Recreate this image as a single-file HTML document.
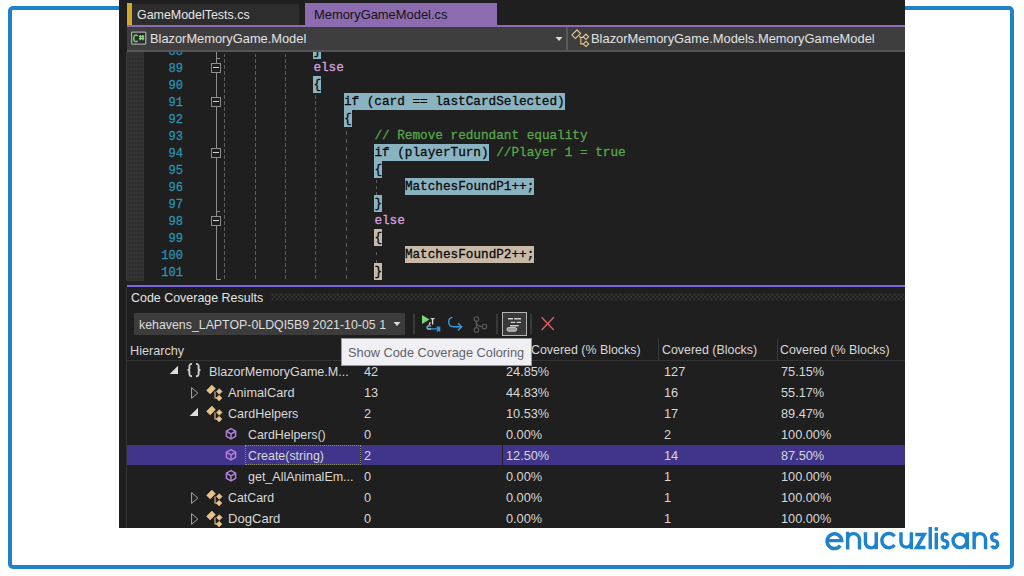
<!DOCTYPE html><html><head><meta charset="utf-8"><style>
*{margin:0;padding:0;box-sizing:border-box}
html,body{width:1024px;height:576px;overflow:hidden;background:#fff;position:relative;font-family:"Liberation Sans",sans-serif}
.a{position:absolute}
.t{position:absolute;white-space:pre;line-height:1}
.frame{left:8px;top:6px;width:1006px;height:563px;border:4px solid #1d82ca;border-radius:5px}
.vs{left:119px;top:0;width:786px;height:528px;background:#1f1f1f}
.cl{position:absolute;font-family:"Liberation Mono",monospace;font-size:12.7px;-webkit-text-stroke:0.3px currentColor;white-space:pre;line-height:17px;height:17px;color:#dcdcdc}
.ln{position:absolute;font-family:"Liberation Mono",monospace;font-size:13px;-webkit-text-stroke:0.3px currentColor;margin-top:1px;transform:scaleX(0.93);transform-origin:100% 0;white-space:pre;line-height:17px;height:17px;color:#2b91af;text-align:right;width:60px;left:123px}
.hb{background:#8ab3c2;color:#0a0a0a;display:inline-block;height:17px;vertical-align:top}
.hy{background:#c7baa8;color:#0a0a0a;display:inline-block;height:17px;vertical-align:top}
.kw{color:#d8a0df}
.cm{color:#57a64a}
.ui{font-size:12.6px;color:#dedede}
.row{position:absolute;left:127px;width:778px;height:21px}
</style></head><body>
<div class="a frame"></div>
<div class="a vs"></div>
<div class="a" style="left:127px;top:3px;width:5px;height:22px;background:#d2a72a"></div>
<div class="a" style="left:132px;top:4px;width:167px;height:21px;background:#2d2d2d"></div>
<div class="t" style="left:136.90px;top:8.07px;font-size:13.50px;color:#e6e6e6;transform:scaleX(0.9209);transform-origin:0 0;">GameModelTests.cs</div>
<div class="a" style="left:305px;top:3px;width:192px;height:22px;background:#8c6bb1"></div>
<div class="t" style="left:313.50px;top:8.07px;font-size:13.50px;color:#141414;transform:scaleX(0.9564);transform-origin:0 0;">MemoryGameModel.cs</div>
<div class="a" style="left:127px;top:25px;width:778px;height:2px;background:#8c6bb1"></div>
<div class="a" style="left:127px;top:27px;width:778px;height:23px;background:#3e3e3e"></div>
<div class="a" style="left:127px;top:50px;width:778px;height:2px;background:#555"></div>
<div class="a" style="left:566px;top:27px;width:2px;height:23px;background:#5a5a5a"></div>
<svg class="a" style="left:130px;top:30px" width="18" height="16" viewBox="0 0 18 16"><rect x="1.65" y="2.05" width="14.1" height="12.1" rx="0.8" fill="#2c2c2c" stroke="#a6a6a6" stroke-width="1.3"/><path d="M7.7 5.9 C7.1 5.3 6.5 5.1 5.9 5.1 C4.4 5.1 3.8 6.6 3.8 8.4 C3.8 10.3 4.5 11.7 5.9 11.7 C6.6 11.7 7.2 11.4 7.7 10.9" fill="none" stroke="#74cc74" stroke-width="1.5"/><path d="M10.3 5v5.2M12.9 5v5.2M9 6.7h5.2M9 8.7h5.2" stroke="#8ade8a" stroke-width="1.3"/></svg>
<div class="t" style="left:149.70px;top:32.47px;font-size:13.50px;color:#e2e2e2;transform:scaleX(0.9510);transform-origin:0 0;">BlazorMemoryGame.Model</div>
<svg class="a" style="left:554px;top:35px" width="10" height="8"><path d="M1.5 2h7l-3.5 4z" fill="#ddd"/></svg>
<svg class="a" style="left:569px;top:27px" width="22" height="22" viewBox="0 0 22 22"><g fill="none" stroke="#eec88e" stroke-width="1.1"><rect x="-3.6" y="-2.5" width="7.2" height="5" transform="translate(7.2 7.2) rotate(-45)"/><rect x="-1.9" y="-1.9" width="3.8" height="3.8" transform="translate(16.9 9.8) rotate(45)"/><rect x="-1.9" y="-1.9" width="3.8" height="3.8" transform="translate(17 16.9) rotate(45)"/><path d="M10.2 9.6 L11.8 10.4 V16.9 H14.3 M11.8 10.4 H14.3"/></g></svg>
<div class="t" style="left:591.00px;top:32.47px;font-size:13.50px;color:#e2e2e2;transform:scaleX(0.9548);transform-origin:0 0;">BlazorMemoryGame.Models.MemoryGameModel</div>
<div class="a" style="left:119px;top:52px;width:786px;height:229px;overflow:hidden">
<div class="a" style="left:-119px;top:-52px;width:1024px;height:576px">
<div class="a" style="left:126px;top:52px;width:1px;height:229px;background:#3a3a3a"></div>
<div class="a" style="left:127px;top:52px;width:17px;height:229px;background:#2f2f2f radial-gradient(circle,#3b3b3b 0.6px,transparent 0.9px) 2.5px 3px/3px 4px"></div>
<div class="a" style="left:216px;top:52px;width:1px;height:228px;background:#8e8e8e"></div>
<div class="a" style="left:216px;top:58px;width:4px;height:1px;background:#8e8e8e"></div>
<div class="a" style="left:216px;top:279px;width:5px;height:1px;background:#8e8e8e"></div>
<div class="a" style="left:216px;top:211px;width:4px;height:1px;background:#8e8e8e"></div>
<div class="a" style="left:211px;top:63px;width:10px;height:10px;border:1px solid #8e8e8e;background:#1f1f1f"></div>
<div class="a" style="left:213px;top:67px;width:6px;height:1px;background:#cfcfcf"></div>
<div class="a" style="left:211px;top:97px;width:10px;height:10px;border:1px solid #8e8e8e;background:#1f1f1f"></div>
<div class="a" style="left:213px;top:101px;width:6px;height:1px;background:#cfcfcf"></div>
<div class="a" style="left:211px;top:148px;width:10px;height:10px;border:1px solid #8e8e8e;background:#1f1f1f"></div>
<div class="a" style="left:213px;top:152px;width:6px;height:1px;background:#cfcfcf"></div>
<div class="a" style="left:211px;top:216px;width:10px;height:10px;border:1px solid #8e8e8e;background:#1f1f1f"></div>
<div class="a" style="left:213px;top:220px;width:6px;height:1px;background:#cfcfcf"></div>
<div class="a" style="left:224.0px;top:52px;width:1px;height:228px;background:repeating-linear-gradient(transparent 0 1.5px,#5c5c5c 1.5px 5.0px,transparent 5.0px 6.0px)"></div>
<div class="a" style="left:254.5px;top:52px;width:1px;height:228px;background:repeating-linear-gradient(transparent 0 1.5px,#5c5c5c 1.5px 5.0px,transparent 5.0px 6.0px)"></div>
<div class="a" style="left:284.9px;top:52px;width:1px;height:228px;background:repeating-linear-gradient(transparent 0 1.5px,#5c5c5c 1.5px 5.0px,transparent 5.0px 6.0px)"></div>
<div class="a" style="left:315.4px;top:93px;width:1px;height:187px;background:repeating-linear-gradient(transparent 0 2.5px,#5c5c5c 2.5px 6.0px,transparent 6.0px 6.0px)"></div>
<div class="a" style="left:345.9px;top:127px;width:1px;height:153px;background:repeating-linear-gradient(transparent 0 4.5px,#5c5c5c 4.5px 8.0px,transparent 8.0px 6.0px)"></div>
<div class="a" style="left:376.4px;top:178px;width:1px;height:17px;background:repeating-linear-gradient(transparent 0 1.5px,#5c5c5c 1.5px 5.0px,transparent 5.0px 6.0px)"></div>
<div class="a" style="left:376.4px;top:246px;width:1px;height:17px;background:repeating-linear-gradient(transparent 0 5.5px,#5c5c5c 5.5px 9.0px,transparent 9.0px 6.0px)"></div>
<div class="ln" style="top:42px">88</div>
<div class="ln" style="top:59px">89</div>
<div class="ln" style="top:76px">90</div>
<div class="ln" style="top:93px">91</div>
<div class="ln" style="top:110px">92</div>
<div class="ln" style="top:127px">93</div>
<div class="ln" style="top:144px">94</div>
<div class="ln" style="top:161px">95</div>
<div class="ln" style="top:178px">96</div>
<div class="ln" style="top:195px">97</div>
<div class="ln" style="top:212px">98</div>
<div class="ln" style="top:229px">99</div>
<div class="ln" style="top:246px">100</div>
<div class="ln" style="top:263px">101</div>
<div class="cl" style="left:313.4px;top:42px"><span class="hb">}</span></div>
<div class="cl" style="left:313.4px;top:59px"><span class="kw">else</span></div>
<div class="cl" style="left:313.4px;top:76px"><span class="hb">{</span></div>
<div class="cl" style="left:343.9px;top:93px"><span class="hb">if (card == lastCardSelected)</span></div>
<div class="cl" style="left:343.9px;top:110px"><span class="hb">{</span></div>
<div class="cl" style="left:374.4px;top:127px"><span class="cm">// Remove redundant equality</span></div>
<div class="cl" style="left:374.4px;top:144px"><span class="hb">if (playerTurn)</span> <span class="cm">//Player 1 = true</span></div>
<div class="cl" style="left:374.4px;top:161px"><span class="hb">{</span></div>
<div class="cl" style="left:404.9px;top:178px"><span class="hb">MatchesFoundP1++;</span></div>
<div class="cl" style="left:374.4px;top:195px"><span class="hb">}</span></div>
<div class="cl" style="left:374.4px;top:212px"><span class="kw">else</span></div>
<div class="cl" style="left:374.4px;top:229px"><span class="hy">{</span></div>
<div class="cl" style="left:404.9px;top:246px"><span class="hy">MatchesFoundP2++;</span></div>
<div class="cl" style="left:374.4px;top:263px"><span class="hy">}</span></div>
</div></div>
<div class="a" style="left:119px;top:281px;width:786px;height:247px;background:#1f1f1f"></div>
<div class="a" style="left:126px;top:287px;width:1px;height:241px;background:#333"></div>
<div class="a" style="left:127px;top:285px;width:778px;height:2px;background:#7a64e0"></div>
<div class="t" style="left:131.10px;top:290.77px;font-size:13.50px;color:#e4e4e4;transform:scaleX(0.9218);transform-origin:0 0;">Code Coverage Results</div>
<svg class="a" style="left:271px;top:293px" width="634" height="8"><defs><pattern id="hp" x="0" y="0" width="4.35" height="4.7" patternUnits="userSpaceOnUse"><rect x="0.6" y="0.8" width="1.6" height="1.6" fill="#444"/><rect x="2.77" y="3.15" width="1.6" height="1.6" fill="#444"/></pattern></defs><rect x="0" y="0" width="634" height="7.6" fill="url(#hp)"/></svg>
<div class="a" style="left:134px;top:313px;width:271px;height:22px;background:#3c3c3c"></div>
<div class="t" style="left:139.10px;top:318.27px;font-size:13.50px;color:#dcdcdc;transform:scaleX(0.9151);transform-origin:0 0;">kehavens_LAPTOP-0LDQI5B9 2021-10-05 1</div>
<svg class="a" style="left:392px;top:320px" width="10" height="8"><path d="M1.5 2h7l-3.5 4z" fill="#ddd"/></svg>
<div class="a" style="left:412.5px;top:314px;width:2.5px;height:20px;background:#3a3a3a"></div>
<div class="a" style="left:495.5px;top:314px;width:2.5px;height:20px;background:#3a3a3a"></div>
<div class="a" style="left:529.5px;top:314px;width:2.5px;height:20px;background:#3a3a3a"></div>
<svg class="a" style="left:418px;top:312px" width="26" height="22" viewBox="0 0 26 22"><path d="M4 3.1 L11.5 7.5 L4 11.9z" fill="#7cd67a"/><path d="M12.6 6.6 H16.6 M14.6 6.6 V12.6 M12.2 10.2 L11.2 12.8" fill="none" stroke="#d4d4d4" stroke-width="1.4"/><path d="M13 13.8 H10.8 C8.4 13.8 8.4 17 10.8 17 H13" fill="none" stroke="#84c8ee" stroke-width="1.3"/><path d="M13 16.9 H20 M18.8 14.4 L21.3 16.9 L18.8 19.4 M21.6 14.4 V19.4" fill="none" stroke="#3a96da" stroke-width="1.4"/></svg>
<svg class="a" style="left:444px;top:312px" width="22" height="22" viewBox="0 0 22 22"><path d="M8.4 5.4 C3.6 6.2 3 14.2 9.4 14.8 H17.4 M14 11.2 l3.6 3.6 -3.6 3.6" fill="none" stroke="#3c99dd" stroke-width="1.4"/></svg>
<svg class="a" style="left:470px;top:314px" width="20" height="20" viewBox="0 0 20 20"><g fill="none" stroke="#5c5c5c" stroke-width="1.1"><circle cx="6.4" cy="5.1" r="2.3"/><circle cx="6.4" cy="15.9" r="2.3"/><circle cx="14.4" cy="12.6" r="2.3"/><path d="M6.4 7.4v6.2M6.4 8.6 C6.6 11 9 12.4 12.1 12.6"/></g></svg>
<div class="a" style="left:502px;top:312px;width:24.5px;height:24px;border:1.5px solid #b4b4b4;background:#393939"></div>
<svg class="a" style="left:502px;top:312px" width="25" height="24" viewBox="0 0 25 24"><g stroke="#d0d0d0" stroke-width="1.4"><path d="M6 6.7h5M12.2 6.7h6.8M8.6 10.4h4.6M14.6 10.4h4.4M8 13.7h8.6"/></g><rect x="5" y="15.6" width="9.6" height="3.6" rx="1.6" fill="#9a9a9a" stroke="#d0d0d0" stroke-width="1"/></svg>
<svg class="a" style="left:539px;top:315px" width="17" height="17" viewBox="0 0 17 17"><path d="M2.6 2.2 L14.8 14.9 M14.8 2.2 L2.6 14.9" stroke="#e05a66" stroke-width="1.4"/></svg>
<div class="t" style="left:130.40px;top:343.97px;font-size:13.50px;color:#d8d8d8;transform:scaleX(0.9372);transform-origin:0 0;">Hierarchy</div>
<div class="a" style="left:127px;top:360px;width:778px;height:1px;background:#333"></div>
<div class="a" style="left:658.0px;top:339px;width:1px;height:21px;background:#3a3a3a"></div>
<div class="a" style="left:776.5px;top:339px;width:1px;height:21px;background:#3a3a3a"></div>
<div class="t" style="left:530.50px;top:343.47px;font-size:13.50px;color:#d8d8d8;transform:scaleX(0.9181);transform-origin:0 0;">Covered (% Blocks)</div>
<div class="t" style="left:662.00px;top:343.47px;font-size:13.50px;color:#d8d8d8;transform:scaleX(0.9190);transform-origin:0 0;">Covered (Blocks)</div>
<div class="t" style="left:780.00px;top:343.47px;font-size:13.50px;color:#d8d8d8;transform:scaleX(0.9190);transform-origin:0 0;">Covered (% Blocks)</div>
<svg class="a" style="left:168.8px;top:365px" width="10" height="10"><path d="M9 0.7 V9 H0.7z" fill="#dcdcdc"/></svg>
<svg class="a" style="left:185px;top:361px" width="18" height="18" viewBox="0 0 18 18"><g fill="none" stroke="#d0d0d0" stroke-width="1.85"><path d="M7 2.8 C4.6 2.8 4.4 3.6 4.4 5.6 V7.4 C4.4 8.5 3.7 9 2.6 9 C3.7 9 4.4 9.5 4.4 10.6 V12.4 C4.4 14.4 4.6 15.2 7 15.2"/><path d="M11 2.8 C13.4 2.8 13.6 3.6 13.6 5.6 V7.4 C13.6 8.5 14.3 9 15.4 9 C14.3 9 13.6 9.5 13.6 10.6 V12.4 C13.6 14.4 13.4 15.2 11 15.2"/></g></svg>
<div class="t" style="left:208.70px;top:364.57px;font-size:13.50px;color:#d8d8d8;transform:scaleX(0.9320);transform-origin:0 0;">BlazorMemoryGame.M...</div>
<div class="t" style="left:364.00px;top:364.57px;font-size:13.50px;color:#d8d8d8;transform:scaleX(0.9435);transform-origin:0 0;">42</div>
<div class="t" style="left:506.00px;top:364.57px;font-size:13.50px;color:#d8d8d8;transform:scaleX(0.9435);transform-origin:0 0;">24.85%</div>
<div class="t" style="left:663.50px;top:364.57px;font-size:13.50px;color:#d8d8d8;transform:scaleX(0.9435);transform-origin:0 0;">127</div>
<div class="t" style="left:781.00px;top:364.57px;font-size:13.50px;color:#d8d8d8;transform:scaleX(0.9435);transform-origin:0 0;">75.15%</div>
<svg class="a" style="left:189.6px;top:386px" width="10" height="14"><path d="M1.6 1.6 L7.8 7 L1.6 12.4z" fill="none" stroke="#a8a8a8" stroke-width="1"/></svg>
<svg class="a" style="left:204.5px;top:384px" width="18" height="18" viewBox="0 0 18 18"><g fill="#e6c286" stroke="#e6c286" stroke-width="0.6"><rect x="-3.7" y="-2.5" width="7.4" height="5" transform="translate(6 5.5) rotate(-45)"/><rect x="-2" y="-2" width="4" height="4" transform="translate(14.3 7.5) rotate(45)"/><rect x="-2" y="-2" width="4" height="4" transform="translate(14.1 14.1) rotate(45)"/></g><path d="M10 7.5 V14 H12.5" fill="none" stroke="#e6c286" stroke-width="1.1"/></svg>
<div class="t" style="left:228.10px;top:385.57px;font-size:13.50px;color:#d8d8d8;transform:scaleX(0.9435);transform-origin:0 0;">AnimalCard</div>
<div class="t" style="left:364.00px;top:385.57px;font-size:13.50px;color:#d8d8d8;transform:scaleX(0.9435);transform-origin:0 0;">13</div>
<div class="t" style="left:506.00px;top:385.57px;font-size:13.50px;color:#d8d8d8;transform:scaleX(0.9435);transform-origin:0 0;">44.83%</div>
<div class="t" style="left:663.50px;top:385.57px;font-size:13.50px;color:#d8d8d8;transform:scaleX(0.9435);transform-origin:0 0;">16</div>
<div class="t" style="left:781.00px;top:385.57px;font-size:13.50px;color:#d8d8d8;transform:scaleX(0.9435);transform-origin:0 0;">55.17%</div>
<svg class="a" style="left:188.8px;top:407px" width="10" height="10"><path d="M9 0.7 V9 H0.7z" fill="#dcdcdc"/></svg>
<svg class="a" style="left:204.5px;top:405px" width="18" height="18" viewBox="0 0 18 18"><g fill="#e6c286" stroke="#e6c286" stroke-width="0.6"><rect x="-3.7" y="-2.5" width="7.4" height="5" transform="translate(6 5.5) rotate(-45)"/><rect x="-2" y="-2" width="4" height="4" transform="translate(14.3 7.5) rotate(45)"/><rect x="-2" y="-2" width="4" height="4" transform="translate(14.1 14.1) rotate(45)"/></g><path d="M10 7.5 V14 H12.5" fill="none" stroke="#e6c286" stroke-width="1.1"/></svg>
<div class="t" style="left:228.10px;top:406.57px;font-size:13.50px;color:#d8d8d8;transform:scaleX(0.9281);transform-origin:0 0;">CardHelpers</div>
<div class="t" style="left:364.00px;top:406.57px;font-size:13.50px;color:#d8d8d8;transform:scaleX(0.9435);transform-origin:0 0;">2</div>
<div class="t" style="left:506.00px;top:406.57px;font-size:13.50px;color:#d8d8d8;transform:scaleX(0.9435);transform-origin:0 0;">10.53%</div>
<div class="t" style="left:663.50px;top:406.57px;font-size:13.50px;color:#d8d8d8;transform:scaleX(0.9435);transform-origin:0 0;">17</div>
<div class="t" style="left:781.00px;top:406.57px;font-size:13.50px;color:#d8d8d8;transform:scaleX(0.9435);transform-origin:0 0;">89.47%</div>
<svg class="a" style="left:223.9px;top:427.3px" width="14" height="14" viewBox="0 0 14 14"><g fill="none" stroke="#b07fd8" stroke-width="1.5"><path d="M7 1.6 L11.6 4.2 V9.4 L7 12 L2.4 9.4 V4.2z"/><path d="M2.8 4.5 L7 6.9 L11.2 4.5 M7 6.9 V11.6"/></g></svg>
<div class="t" style="left:247.50px;top:427.57px;font-size:13.50px;color:#d8d8d8;transform:scaleX(0.9168);transform-origin:0 0;">CardHelpers()</div>
<div class="t" style="left:364.00px;top:427.57px;font-size:13.50px;color:#d8d8d8;transform:scaleX(0.9435);transform-origin:0 0;">0</div>
<div class="t" style="left:506.00px;top:427.57px;font-size:13.50px;color:#d8d8d8;transform:scaleX(0.9435);transform-origin:0 0;">0.00%</div>
<div class="t" style="left:663.50px;top:427.57px;font-size:13.50px;color:#d8d8d8;transform:scaleX(0.9435);transform-origin:0 0;">2</div>
<div class="t" style="left:781.00px;top:427.57px;font-size:13.50px;color:#d8d8d8;transform:scaleX(0.9435);transform-origin:0 0;">100.00%</div>
<div class="a" style="left:127px;top:445px;width:778px;height:20px;background:#40358a"></div>
<div class="a" style="left:360px;top:445px;width:1px;height:20px;background:#1f1f1f"></div>
<div class="a" style="left:502px;top:445px;width:1px;height:20px;background:#1f1f1f"></div>
<div class="a" style="left:244.5px;top:445px;width:116px;height:20px;border:1px dotted #8a8a70"></div>
<svg class="a" style="left:223.9px;top:448.3px" width="14" height="14" viewBox="0 0 14 14"><g fill="none" stroke="#b07fd8" stroke-width="1.5"><path d="M7 1.6 L11.6 4.2 V9.4 L7 12 L2.4 9.4 V4.2z"/><path d="M2.8 4.5 L7 6.9 L11.2 4.5 M7 6.9 V11.6"/></g></svg>
<div class="t" style="left:247.50px;top:448.57px;font-size:13.50px;color:#d8d8d8;transform:scaleX(0.9200);transform-origin:0 0;">Create(string)</div>
<div class="t" style="left:364.00px;top:448.57px;font-size:13.50px;color:#d8d8d8;transform:scaleX(0.9435);transform-origin:0 0;">2</div>
<div class="t" style="left:506.00px;top:448.57px;font-size:13.50px;color:#d8d8d8;transform:scaleX(0.9435);transform-origin:0 0;">12.50%</div>
<div class="t" style="left:663.50px;top:448.57px;font-size:13.50px;color:#d8d8d8;transform:scaleX(0.9435);transform-origin:0 0;">14</div>
<div class="t" style="left:781.00px;top:448.57px;font-size:13.50px;color:#d8d8d8;transform:scaleX(0.9435);transform-origin:0 0;">87.50%</div>
<svg class="a" style="left:223.9px;top:469.3px" width="14" height="14" viewBox="0 0 14 14"><g fill="none" stroke="#b07fd8" stroke-width="1.5"><path d="M7 1.6 L11.6 4.2 V9.4 L7 12 L2.4 9.4 V4.2z"/><path d="M2.8 4.5 L7 6.9 L11.2 4.5 M7 6.9 V11.6"/></g></svg>
<div class="t" style="left:247.50px;top:469.57px;font-size:13.50px;color:#d8d8d8;transform:scaleX(0.9253);transform-origin:0 0;">get_AllAnimalEm...</div>
<div class="t" style="left:364.00px;top:469.57px;font-size:13.50px;color:#d8d8d8;transform:scaleX(0.9435);transform-origin:0 0;">0</div>
<div class="t" style="left:506.00px;top:469.57px;font-size:13.50px;color:#d8d8d8;transform:scaleX(0.9435);transform-origin:0 0;">0.00%</div>
<div class="t" style="left:663.50px;top:469.57px;font-size:13.50px;color:#d8d8d8;transform:scaleX(0.9435);transform-origin:0 0;">1</div>
<div class="t" style="left:781.00px;top:469.57px;font-size:13.50px;color:#d8d8d8;transform:scaleX(0.9435);transform-origin:0 0;">100.00%</div>
<svg class="a" style="left:189.6px;top:491px" width="10" height="14"><path d="M1.6 1.6 L7.8 7 L1.6 12.4z" fill="none" stroke="#a8a8a8" stroke-width="1"/></svg>
<svg class="a" style="left:204.5px;top:489px" width="18" height="18" viewBox="0 0 18 18"><g fill="#e6c286" stroke="#e6c286" stroke-width="0.6"><rect x="-3.7" y="-2.5" width="7.4" height="5" transform="translate(6 5.5) rotate(-45)"/><rect x="-2" y="-2" width="4" height="4" transform="translate(14.3 7.5) rotate(45)"/><rect x="-2" y="-2" width="4" height="4" transform="translate(14.1 14.1) rotate(45)"/></g><path d="M10 7.5 V14 H12.5" fill="none" stroke="#e6c286" stroke-width="1.1"/></svg>
<div class="t" style="left:228.10px;top:490.57px;font-size:13.50px;color:#d8d8d8;transform:scaleX(0.9154);transform-origin:0 0;">CatCard</div>
<div class="t" style="left:364.00px;top:490.57px;font-size:13.50px;color:#d8d8d8;transform:scaleX(0.9435);transform-origin:0 0;">0</div>
<div class="t" style="left:506.00px;top:490.57px;font-size:13.50px;color:#d8d8d8;transform:scaleX(0.9435);transform-origin:0 0;">0.00%</div>
<div class="t" style="left:663.50px;top:490.57px;font-size:13.50px;color:#d8d8d8;transform:scaleX(0.9435);transform-origin:0 0;">1</div>
<div class="t" style="left:781.00px;top:490.57px;font-size:13.50px;color:#d8d8d8;transform:scaleX(0.9435);transform-origin:0 0;">100.00%</div>
<svg class="a" style="left:189.6px;top:512px" width="10" height="14"><path d="M1.6 1.6 L7.8 7 L1.6 12.4z" fill="none" stroke="#a8a8a8" stroke-width="1"/></svg>
<svg class="a" style="left:204.5px;top:510px" width="18" height="18" viewBox="0 0 18 18"><g fill="#e6c286" stroke="#e6c286" stroke-width="0.6"><rect x="-3.7" y="-2.5" width="7.4" height="5" transform="translate(6 5.5) rotate(-45)"/><rect x="-2" y="-2" width="4" height="4" transform="translate(14.3 7.5) rotate(45)"/><rect x="-2" y="-2" width="4" height="4" transform="translate(14.1 14.1) rotate(45)"/></g><path d="M10 7.5 V14 H12.5" fill="none" stroke="#e6c286" stroke-width="1.1"/></svg>
<div class="t" style="left:228.10px;top:511.57px;font-size:13.50px;color:#d8d8d8;transform:scaleX(0.9693);transform-origin:0 0;">DogCard</div>
<div class="t" style="left:364.00px;top:511.57px;font-size:13.50px;color:#d8d8d8;transform:scaleX(0.9435);transform-origin:0 0;">0</div>
<div class="t" style="left:506.00px;top:511.57px;font-size:13.50px;color:#d8d8d8;transform:scaleX(0.9435);transform-origin:0 0;">0.00%</div>
<div class="t" style="left:663.50px;top:511.57px;font-size:13.50px;color:#d8d8d8;transform:scaleX(0.9435);transform-origin:0 0;">1</div>
<div class="t" style="left:781.00px;top:511.57px;font-size:13.50px;color:#d8d8d8;transform:scaleX(0.9435);transform-origin:0 0;">100.00%</div>
<div class="a" style="left:341px;top:338px;width:191px;height:28px;background:#f0f0f4;border:1px solid #9a9a9a"></div>
<div class="t" style="left:348.30px;top:345.87px;font-size:13.50px;color:#626268;transform:scaleX(0.9465);transform-origin:0 0;">Show Code Coverage Coloring</div>
<svg class="a" style="left:0;top:0" width="1024" height="576"><g fill="none" stroke="#1e83cc" stroke-width="3.45"><path d="M826.9 540.6 H841.75 A7.35 7.35 0 1 0 840.3 545.6"/><path d="M847.65 531.8 V549.5 M847.65 539.55 A5.9 5.9 0 0 1 859.5 539.55 V549.5"/><path d="M865.45 532.2 V542.45 A5.4 5.4 0 0 0 876.25 542.45 M876.25 532.2 V549.3"/><path d="M894.6 536.2 A7.15 7.15 0 1 0 894.6 545.0"/><path d="M901 532.2 V542.45 A5.2 5.2 0 0 0 911.35 542.45 M911.35 532.2 V549.3"/><path d="M915.3 534.45 H924.2 L916.6 547.55 H925.5" stroke-linejoin="miter"/><path d="M930.25 527 V549.3 M936.3 527.3 V530.8 M936.3 532.8 V549.3"/><path d="M947.53 535.68 A2.80 3.50 0 0 0 944.95 533.65 A2.80 3.50 0 0 0 944.95 540.65 A2.80 3.50 0 0 1 944.95 547.65 A2.80 3.50 0 0 1 942.37 545.62"/><circle cx="959.9" cy="540.75" r="6.85"/><path d="M967.35 532.3 V549.3"/><path d="M974.15 531.8 V549.3 M974.15 539.3 A5.7 5.7 0 0 1 985.55 539.3 V549.3"/><path d="M997.41 535.68 A3.00 3.50 0 0 0 994.65 533.65 A3.00 3.50 0 0 0 994.65 540.65 A3.00 3.50 0 0 1 994.65 547.65 A3.00 3.50 0 0 1 991.89 545.62"/></g></svg>
</body></html>
